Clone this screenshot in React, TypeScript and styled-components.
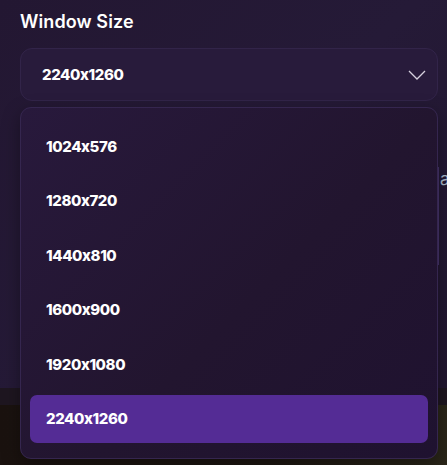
import React, { useState } from 'react';
import styled, { createGlobalStyle } from 'styled-components';

const GlobalStyle = createGlobalStyle`
  html, body {
    margin: 0;
    padding: 0;
    background: #1b130f;
  }
  body {
    font-family: Inter, 'Noto Sans', sans-serif;
    overflow: hidden;
  }
`;

const Screen = styled.div`
  position: relative;
  width: 447px;
  height: 465px;
  overflow: hidden;
  background: linear-gradient(90deg, #1a120f 0%, #1d1611 60%, #2a2619 100%);
`;

const Panel = styled.div`
  height: 377px;
  padding: 11px 0 0 20px;
  background: linear-gradient(135deg, #231732 0%, #251a37 50%, #21162f 100%);
  border-bottom: 17px solid #1e1620;
`;

const Title = styled.h2`
  margin: 0;
  font-size: 18px;
  line-height: 22px;
  font-weight: 600;
  color: #ffffff;
  letter-spacing: 0.1px;
`;

const Select = styled.button`
  display: flex;
  align-items: center;
  justify-content: space-between;
  width: 418px;
  height: 53px;
  margin-top: 15px;
  padding: 0 11px 0 21px;
  box-sizing: border-box;
  background: #281b3b;
  border: 1px solid #322449;
  border-radius: 12px;
  color: #ffffff;
  font-family: inherit;
  font-size: 15px;
  font-weight: 800;
  letter-spacing: -0.4px;
  cursor: pointer;
`;

const Behind = styled.div`
  display: flex;
  justify-content: flex-end;
  width: 427px;
  height: 160px;
  margin-top: 8px;
`;

const BehindText = styled.span`
  margin-top: 60px;
  font-size: 17px;
  line-height: 20px;
  color: #a9b8c9;
  width: 7px;
  overflow: hidden;
`;

const BehindEdge = styled.div`
  width: 1px;
  height: 98px;
  margin: 58px 1px 0 0;
  background: #45336a;
`;

const Menu = styled.ul`
  position: absolute;
  left: 20px;
  top: 107px;
  width: 418px;
  margin: 0;
  padding: 14px 9px 15px;
  box-sizing: border-box;
  list-style: none;
  display: flex;
  flex-direction: column;
  gap: 6.6px;
  background: linear-gradient(135deg, #28193c 0%, #22152f 55%, #1f1230 100%);
  border: 1px solid #35264f;
  border-radius: 11px;
  box-shadow: 0 6px 18px rgba(0, 0, 0, 0.35);
`;

const Option = styled.li<{ $active: boolean }>`
  height: 48px;
  display: flex;
  align-items: center;
  padding-left: 16px;
  border-radius: 7px;
  background: ${(p) => (p.$active ? '#542c95' : 'transparent')};
  color: #ffffff;
  font-size: 15px;
  font-weight: 800;
  letter-spacing: -0.4px;
  cursor: pointer;
`;

const Chevron = () => (
  <svg width="18" height="10" viewBox="0 0 18 10" fill="none">
    <path d="M1 1l8 8 8-8" stroke="#d6d0de" strokeWidth="1.3" />
  </svg>
);

const sizes = ['1024x576', '1280x720', '1440x810', '1600x900', '1920x1080', '2240x1260'];

const App = (): React.ReactElement => {
  const [size, setSize] = useState('2240x1260');

  return (
    <>
      <GlobalStyle />
      <Screen>
        <Panel>
          <Title>Window Size</Title>
          <Select>
            <span>{size}</span>
            <Chevron />
          </Select>
          <Behind>
            <BehindEdge />
            <BehindText>a</BehindText>
          </Behind>
        </Panel>
        <Menu>
          {sizes.map((s) => (
            <Option key={s} $active={s === size} onClick={() => setSize(s)}>
              {s}
            </Option>
          ))}
        </Menu>
      </Screen>
    </>
  );
};

export default App;
